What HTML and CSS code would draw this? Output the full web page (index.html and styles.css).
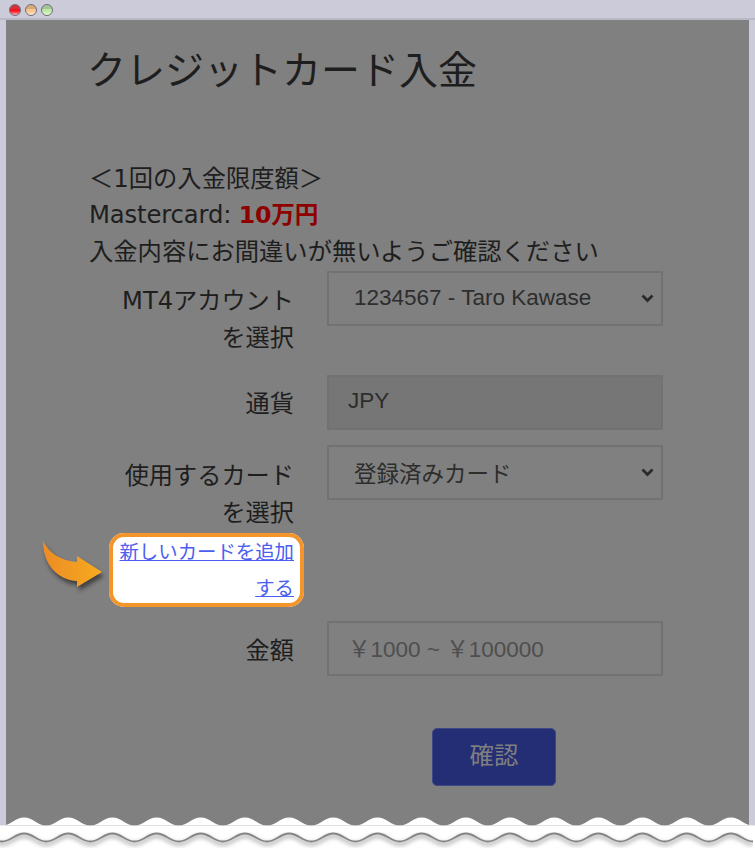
FILE: index.html
```html
<!DOCTYPE html>
<html lang="ja">
<head>
<meta charset="utf-8">
<title>クレジットカード入金</title>
<link rel="stylesheet" href="styles.css">
</head>
<body>
<div class="window">
  <div class="titlebar">
    <span class="light red"></span><span class="light amber"></span><span class="light green"></span>
  </div>
  <main class="content">
    <h1 class="title">クレジットカード入金</h1>
    <div class="notice">
      <p>＜1回の入金限度額＞</p>
      <p class="card-line">Mastercard: <strong class="limit">10万円</strong></p>
      <p>入金内容にお間違いが無いようご確認ください</p>
    </div>
    <form class="form">
      <label class="label label-tall">MT4アカウント<br>を選択</label>
      <div class="select">1234567 - Taro Kawase<svg class="chev" viewBox="0 0 13 9"><path d="M1.5 1.5 6.5 6.5l5-5" fill="none" stroke="#2a2a2a" stroke-width="2.8"/></svg></div>

      <label class="label label-currency">通貨</label>
      <div class="field field-disabled">JPY</div>

      <div class="label label-card">
        <span>使用するカード<br>を選択</span>
        <div class="link-row">
          <svg class="arrow" viewBox="0 0 75 62">
            <defs>
              <linearGradient id="ag" x1="0" x2="1" y1="0" y2="0"><stop offset="0" stop-color="#ec8c25"/><stop offset="1" stop-color="#f7aa20"/></linearGradient>
              <filter id="as" x="-30%" y="-30%" width="170%" height="170%"><feGaussianBlur stdDeviation="2.2"/></filter>
            </defs>
            <path d="M7 5C13 17 25 25 41 26V20L66 36 41 51V45C22 44 7 29 7 5Z" fill="#2a2a2a" opacity=".75" transform="translate(2 4)" filter="url(#as)"/>
            <path d="M7 5C13 17 25 25 41 26V20L66 36 41 51V45C22 44 7 29 7 5Z" fill="url(#ag)"/>
          </svg>
          <a class="add-link" href="#">新しいカードを追加する</a>
        </div>
      </div>
      <div class="select select-card">登録済みカード<svg class="chev" viewBox="0 0 13 9"><path d="M1.5 1.5 6.5 6.5l5-5" fill="none" stroke="#2a2a2a" stroke-width="2.8"/></svg></div>

      <label class="label label-amount">金額</label>
      <div class="field field-amount">￥1000 ~ ￥100000</div>
    </form>
    <div class="actions"><button class="confirm" type="button">確認</button></div>
  </main>
</div>
<svg class="tear" viewBox="0 0 755 40">
  <defs>
    <filter id="ts" x="0" y="-50%" width="100%" height="200%"><feGaussianBlur stdDeviation="2"/></filter>
    <path id="wave" d="M-42 15.5c9 0 13-8 22-8s13 8 22 8c9 0 13-8 22-8s13 8 22 8c9 0 13-8 22-8s13 8 22 8c9 0 13-8 22-8s13 8 22 8c9 0 13-8 22-8s13 8 22 8c9 0 13-8 22-8s13 8 22 8c9 0 13-8 22-8s13 8 22 8c9 0 13-8 22-8s13 8 22 8c9 0 13-8 22-8s13 8 22 8c9 0 13-8 22-8s13 8 22 8c9 0 13-8 22-8s13 8 22 8c9 0 13-8 22-8s13 8 22 8c9 0 13-8 22-8s13 8 22 8c9 0 13-8 22-8s13 8 22 8c9 0 13-8 22-8s13 8 22 8c9 0 13-8 22-8s13 8 22 8c9 0 13-8 22-8s13 8 22 8c9 0 13-8 22-8s13 8 22 8"/>
  </defs>
  <g transform="scale(1.004 1)">
    <path class="tear-fill" d="M-42 40V15.5H800V40Z"/>
    <use href="#wave" class="tear-body"/>
    <use href="#wave" class="tear-shadow" y="18.5" filter="url(#ts)"/>
    <use href="#wave" class="tear-line" y="16"/>
  </g>
</svg>
</body>
</html>
```
FILE: styles.css
```css
* { box-sizing: border-box; }
html, body { margin: 0; padding: 0; }
body {
  width: 755px;
  height: 850px;
  overflow: hidden;
  position: relative;
  background: #fff;
  font-family: "DejaVu Sans", "Noto Sans CJK JP", sans-serif;
  color: #1e1e1e;
}
.window {
  height: 850px;
  background: #cbcbd9;
  padding: 0 6px;
  display: flex;
  flex-direction: column;
}
.titlebar {
  height: 20px;
  flex: none;
  display: flex;
  align-items: flex-start;
  gap: 4px;
  padding: 4px 0 0 9px;
  border-bottom: 2px solid #b9b9c6;
  margin: 0 -6px;
}
.light {
  width: 12px;
  height: 12px;
  border-radius: 50%;
  border: 1px solid #6f6f78;
}
.red { background: linear-gradient(#d2303a 0 40%, #f8131f 40% 60%, #f7b8b8); }
.amber { background: linear-gradient(#d8a878 0 40%, #f8c68e 40% 60%, #fbe7d0); }
.green { background: linear-gradient(#a4c498 0 40%, #bce9a4 40% 60%, #e8f8de); }
.content {
  flex: 1;
  background: #808080;
  padding: 0 0 0 83px;
}
.title {
  margin: 0 0 0 -2px;
  padding-top: 18px;
  font-family: "Noto Sans CJK JP", sans-serif;
  font-size: 39px;
  line-height: 58px;
  font-weight: 400;
}
.notice {
  margin-top: 65px;
  font-size: 24.3px;
  line-height: 36.33px;
}
.notice p { margin: 0; }
.card-line { letter-spacing: -0.15px; }
.limit { color: #8e0000; font-weight: 700; font-size: 23.6px; }
.form {
  width: 574px;
  margin-top: 1px;
  display: grid;
  grid-template-columns: 205px 336px;
  column-gap: 33px;
}
.label {
  font-size: 24.2px;
  line-height: 37px;
  text-align: right;
  padding-top: 12px;
}
.label-tall { height: 104px; }
.label-currency { height: 70px; padding-top: 11px; }
.label-card { height: 176px; padding-top: 13px; }
.label-amount { padding-top: 12px; }
.select, .field {
  height: 55px;
  border: 2px solid #727272;
  font-family: "Liberation Sans", "Noto Sans CJK JP", sans-serif;
  font-size: 22.5px;
  color: #2d2d2d;
  display: flex;
  align-items: center;
}
.select { padding: 0 7px 0 25px; justify-content: space-between; }
.field { padding: 0 19px 2px; }
.field-disabled { background: #767676; }
.field-amount { color: #4e4e4e; }
.chev { width: 13px; height: 9px; }
.link-row {
  display: flex;
  justify-content: flex-end;
  position: relative;
  margin-top: 1px;
}
.add-link {
  display: block;
  width: 195px;
  height: 74px;
  padding: 0 10px;
  background: #fff;
  box-shadow: inset 0 0 0 4px #f4952b;
  border-radius: 15px;
  font-family: "Noto Sans CJK JP", sans-serif;
  font-size: 19.4px;
  line-height: 36px;
  color: #4a5ef0;
  text-align: right;
  margin-right: -10px;
}
.arrow {
  position: absolute;
  left: -53px;
  top: 3px;
  width: 75px;
  height: 62px;
}
.actions {
  margin-top: 52px;
  padding-left: 343px;
}
.confirm {
  width: 124px;
  height: 58px;
  background: #232e74;
  border: 1px solid #3e4785;
  border-radius: 5px;
  color: #7f7f7f;
  font-family: "Noto Sans CJK JP", sans-serif;
  font-size: 24.4px;
  padding: 0 0 7px;
}
.tear {
  position: absolute;
  left: 0;
  top: 810px;
  width: 755px;
  height: 40px;
}
.tear-fill { fill: #fff; }
.tear-body { fill: #fff; stroke: none; }
.tear-shadow { fill: none; stroke: #a8a8a8; stroke-width: 3; }
.tear-line { fill: none; stroke: #858585; stroke-width: 1.8; }
```
